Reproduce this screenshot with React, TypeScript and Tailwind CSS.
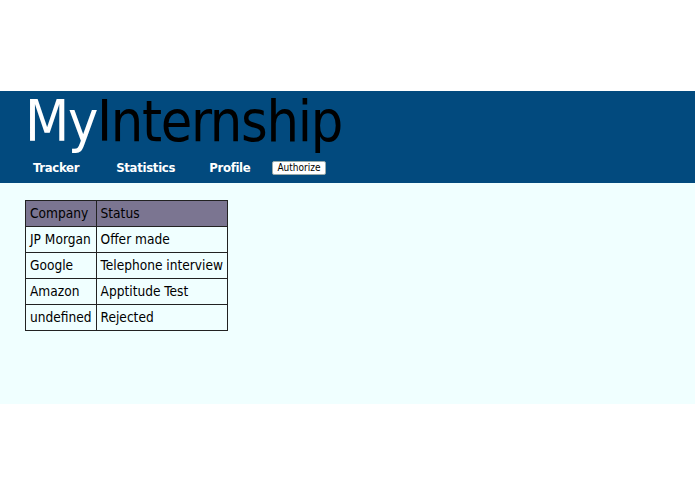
import React from "react";

export default function App() {
  const rows = [
    { company: "JP Morgan", status: "Offer made" },
    { company: "Google", status: "Telephone interview" },
    { company: "Amazon", status: "Apptitude Test" },
    { company: "undefined", status: "Rejected" },
  ];

  return (
    <div className="min-h-[494px] bg-white pt-[91px] font-['DejaVu_Sans_Condensed','DejaVu_Sans',sans-serif] [font-stretch:condensed]">
      <header className="h-[92px] bg-[#024a7e] px-[25px]">
        <h1 className="text-[57px] leading-[60px] tracking-[-1.3px]">
          <span className="text-white">My</span>
          <span className="text-black">Internship</span>
        </h1>
        <nav className="flex items-center h-[33px] text-[13px] font-bold text-white tracking-[-0.3px]">
          <a className="ml-[8px]">Tracker</a>
          <a className="ml-[37px]">Statistics</a>
          <a className="ml-[34px]">Profile</a>
          <button className="ml-[22px] bg-white text-black font-normal text-[10px] leading-[12px] px-[4px] rounded-[2px] border border-[#9aa] tracking-normal">
            Authorize
          </button>
        </nav>
      </header>
      <main className="h-[221px] bg-[#f0ffff] px-[25px] pt-[17px]">
        <table className="border-collapse text-[13.6px] text-black">
          <thead>
            <tr className="bg-[#7b7591]">
              <th className="border border-[#222] h-[26px] px-[4px] text-left font-normal">Company</th>
              <th className="border border-[#222] h-[26px] px-[4px] text-left font-normal">Status</th>
            </tr>
          </thead>
          <tbody>
            {rows.map((r) => (
              <tr key={r.company}>
                <td className="border border-[#222] h-[26px] px-[4px]">{r.company}</td>
                <td className="border border-[#222] h-[26px] px-[4px]">{r.status}</td>
              </tr>
            ))}
          </tbody>
        </table>
      </main>
    </div>
  );
}
